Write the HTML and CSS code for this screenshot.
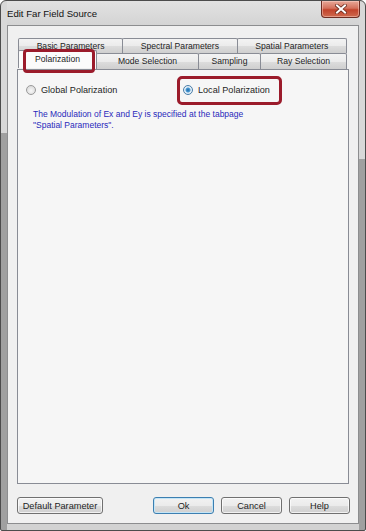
FILE: index.html
```html
<!DOCTYPE html>
<html lang="en">
<head>
    <meta charset="UTF-8">
    <title>Edit Far Field Source</title>
    <link rel="stylesheet" href="styles.css">
</head>
<body>
    <div class="window">
        <div class="titlebar">
            <span class="title">Edit Far Field Source</span>
            <button class="close" title="Close">
                <svg width="12" height="10" viewBox="0 0 12 10">
                    <path d="M2 1.5 L10 8.5 M10 1.5 L2 8.5" stroke="#6a2a1c" stroke-width="3.6" stroke-linecap="square"/>
                    <path d="M2 1.5 L10 8.5 M10 1.5 L2 8.5" stroke="#ffffff" stroke-width="2" stroke-linecap="square"/>
                </svg>
            </button>
        </div>
        <div class="client">
            <div class="tabs">
                <div class="tab-row back">
                    <div class="tab">Basic Parameters</div>
                    <div class="tab">Spectral Parameters</div>
                    <div class="tab">Spatial Parameters</div>
                </div>
                <div class="tab-row front">
                    <div class="tab active marked">Polarization</div>
                    <div class="tab mode">Mode Selection</div>
                    <div class="tab sampling">Sampling</div>
                    <div class="tab ray">Ray Selection</div>
                </div>
            </div>
            <div class="panel">
                <div class="options">
                    <label class="radio">
                        <span class="dot"></span>
                        Global Polarization
                    </label>
                    <label class="radio checked marked">
                        <span class="dot"></span>
                        Local Polarization
                    </label>
                </div>
                <p class="note">The Modulation of Ex and Ey is specified at the tabpage<br>"Spatial Parameters".</p>
            </div>
            <div class="buttons">
                <button class="btn wide">Default Parameter</button>
                <div class="right">
                    <button class="btn default">Ok</button>
                    <button class="btn">Cancel</button>
                    <button class="btn">Help</button>
                </div>
            </div>
        </div>
    </div>
</body>
</html>
```

FILE: styles.css
```css
body {
    margin: 0;
    font-family: 'Liberation Sans', Arial, sans-serif;
    font-size: 9px;
    color: #1e1e1e;
    background: #ffffff;
}
.window {
    width: 366px;
    height: 531px;
    box-sizing: border-box;
    border: 1px solid #4c4c4c;
    border-radius: 6px 6px 2px 2px;
    padding: 0 6px 6px;
    display: flex;
    flex-direction: column;
    background:
        linear-gradient(#d8d8d8 132px, #a0a0a0 132px) left top / 6px 100% no-repeat,
        linear-gradient(#d8d8d8 158px, #a0a0a0 158px) right top / 6px 100% no-repeat,
        linear-gradient(#e2e2e2, #d4d4d4 24px, #d2d2d2);
}
.titlebar {
    height: 24px;
    display: flex;
    justify-content: space-between;
    align-items: flex-start;
}
.title {
    font-size: 9.6px;
    color: #111;
    margin-top: 7px;
}
.close {
    width: 39px;
    height: 17px;
    margin: 0 -1px 0 0;
    padding: 0;
    border: 1px solid #6e2d22;
    border-top: none;
    border-radius: 0 0 4px 4px;
    background: linear-gradient(#e8a898, #d4715c 45%, #c2432b 55%, #cf6a4e);
    box-shadow: inset 0 0 0 1px rgba(255, 220, 210, 0.45);
    display: flex;
    align-items: center;
    justify-content: center;
}
.client {
    flex: 1;
    display: flex;
    flex-direction: column;
    border: 1px solid #8c8d8f;
    background: #f0f0f0;
    padding: 12px 9px 9px;
}
.tab-row {
    display: flex;
    margin: 0 2px 0 1px;
}
.tab {
    flex: 1 1 auto;
    position: relative;
    white-space: nowrap;
    text-align: center;
    font-size: 8.6px;
    border: 1px solid #898c95;
    border-bottom: none;
    border-radius: 2px 2px 0 0;
    background: linear-gradient(#f3f3f3, #ebebeb 50%, #dddddd 51%, #cfcfcf);
    color: #1e1e1e;
}
.tab + .tab {
    margin-left: -1px;
}
.back .tab {
    height: 14px;
    line-height: 14px;
    overflow: hidden;
}
.front .tab {
    flex: none;
    height: 15px;
    line-height: 15px;
}
.front .tab.active {
    width: 79px;
    height: 18px;
    line-height: 16px;
    margin: -3px -1px -1px 0;
    background: #fbfbfb;
    z-index: 2;
    box-sizing: border-box;
}
.front .tab.active + .tab {
    margin-left: 0;
}
.front .mode {
    width: 101px;
}
.front .sampling {
    width: 61px;
}
.front .ray {
    flex: 1;
}
.tab.marked::after {
    content: "";
    position: absolute;
    left: 4px;
    right: 1px;
    top: -2px;
    bottom: -5px;
    border: 3px solid #9b1b2b;
    border-radius: 4px;
}
.panel {
    flex: 1;
    border: 1px solid #898c95;
    background: #f6f6f6;
    padding: 15px 8px 0;
}
.options {
    display: grid;
    grid-template-columns: 157px auto;
    align-items: center;
}
.radio {
    position: relative;
    display: inline-flex;
    align-items: center;
    gap: 5px;
    height: 10px;
    font-size: 9.1px;
    justify-self: start;
}
.dot {
    width: 8px;
    height: 8px;
    border-radius: 50%;
    border: 1px solid #9a9a9a;
    background: radial-gradient(circle at 50% 60%, #f8f8f8, #d2d2d2);
}
.checked .dot {
    border-color: #4a7ea8;
    background: radial-gradient(circle, #1f6aa8 0, #4a9ad4 2px, #e8f2fa 3px, #cddde9 100%);
}
.radio.marked::after {
    content: "";
    position: absolute;
    left: -6px;
    right: -12px;
    top: -9px;
    bottom: -10px;
    border: 3px solid #9b1b2b;
    border-radius: 5px;
}
.note {
    margin: 14px 0 0 7px;
    font-size: 8.5px;
    line-height: 11px;
    color: #2929bb;
}
.buttons {
    margin-top: 13px;
    margin-right: -1px;
    display: flex;
    justify-content: space-between;
}
.right {
    display: flex;
    gap: 7px;
}
.btn {
    height: 17px;
    width: 61px;
    padding: 0;
    font-family: inherit;
    font-size: 9.2px;
    color: #1e1e1e;
    border: 1px solid #707070;
    border-radius: 3px;
    background: linear-gradient(#f2f2f2, #ebebeb 50%, #dddddd 51%, #cfcfcf);
    box-shadow: inset 0 0 0 1px rgba(255, 255, 255, 0.7);
}
.btn.wide {
    width: 86px;
}
.btn.default {
    border-color: #3c7fb1;
    box-shadow: inset 0 0 0 1px #c4e5f6;
}
```
